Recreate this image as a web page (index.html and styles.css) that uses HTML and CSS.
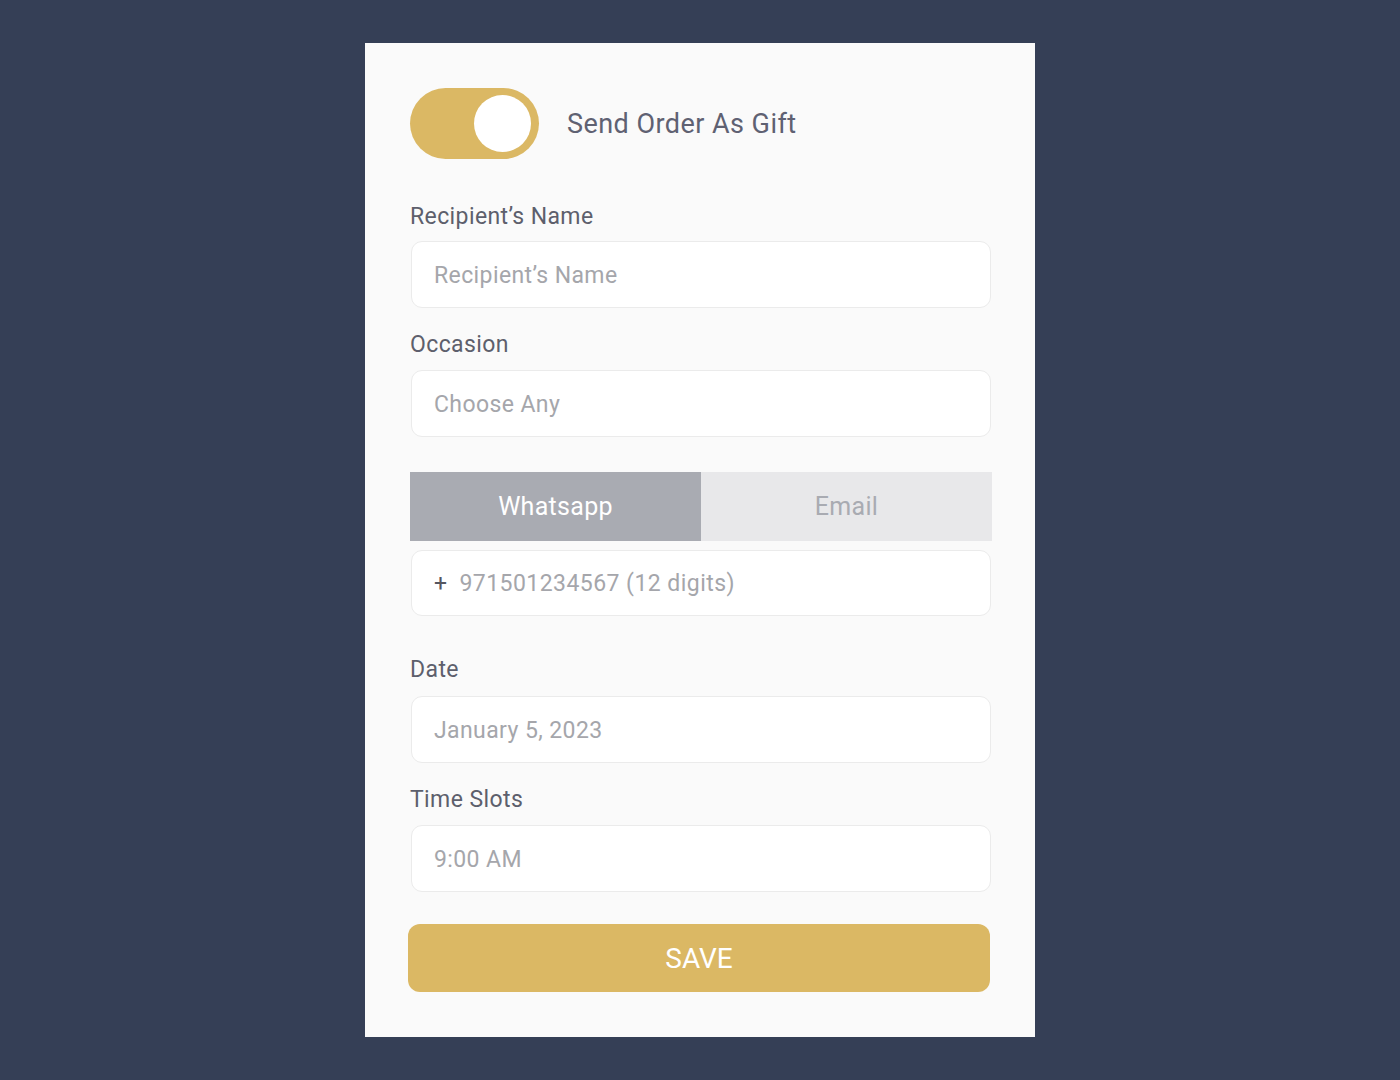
FILE: index.html
```html
<!DOCTYPE html>
<html>
<head>
<meta charset="utf-8">
<link rel="stylesheet" href="styles.css">
</head>
<body>
<div class="card">
  <div class="gift-row">
    <div class="toggle"><span class="knob"></span></div>
    <span class="gift-text">Send Order As Gift</span>
  </div>

  <div class="label first">Recipient’s Name</div>
  <div class="field"><span class="ph">Recipient’s Name</span></div>

  <div class="label">Occasion</div>
  <div class="field"><span class="ph">Choose Any</span></div>

  <div class="tabs">
    <div class="tab active">Whatsapp</div>
    <div class="tab">Email</div>
  </div>
  <div class="field phone"><span class="plus">+</span><span class="ph">971501234567 (12 digits)</span></div>

  <div class="label date">Date</div>
  <div class="field"><span class="ph">January 5, 2023</span></div>

  <div class="label">Time Slots</div>
  <div class="field"><span class="ph">9:00 AM</span></div>

  <div class="save">SAVE</div>
</div>
</body>
</html>
```

FILE: styles.css
```css
html, body {
  margin: 0;
  padding: 0;
}
body {
  background: #353f56;
  font-family: Roboto, "Liberation Sans", sans-serif;
  font-weight: 400;
  width: 1400px;
  height: 1080px;
  display: flex;
  justify-content: center;
  align-items: flex-start;
}
.card {
  margin-top: 43px;
  width: 670px;
  height: 994px;
  box-sizing: border-box;
  background: #fafafa;
  padding: 45px 44px 45px 45px;
  display: flex;
  flex-direction: column;
}
.gift-row {
  display: flex;
  align-items: center;
  height: 71px;
}
.toggle {
  width: 129px;
  height: 71px;
  border-radius: 36px;
  background: #dbb864;
  position: relative;
  flex: none;
}
.knob {
  position: absolute;
  width: 57px;
  height: 57px;
  border-radius: 50%;
  background: #fff;
  top: 7px;
  left: 64px;
}
.gift-text {
  margin-left: 28px;
  font-size: 27px;
  letter-spacing: 0.45px;
  color: #5f6172;
}
.label {
  font-size: 23px;
  letter-spacing: 0.4px;
  line-height: 26px;
  color: #5d5f6c;
  margin-top: 24px;
  margin-bottom: 12px;
}
.label.first {
  margin-top: 45px;
  margin-bottom: 11px;
}
.label.date {
  margin-top: 41px;
  margin-bottom: 13px;
}
.field {
  height: 67px;
  box-sizing: border-box;
  margin-left: 1px;
  border: 1px solid #ebebeb;
  border-radius: 11px;
  background: #fff;
  display: flex;
  align-items: center;
  padding-left: 22px;
  padding-top: 2px;
  font-size: 23px;
  letter-spacing: 0.4px;
}
.ph {
  color: #a5a6ab;
}
.tabs {
  margin-top: 35px;
  display: flex;
  height: 69px;
  margin-right: -1px;
}
.tab {
  flex: 1;
  display: flex;
  align-items: center;
  justify-content: center;
  font-size: 25px;
  letter-spacing: 0.3px;
  padding-top: 1px;
  background: #e8e8ea;
  color: #a9abb2;
}
.tab.active {
  background: #a9abb2;
  color: #fff;
}
.field.phone {
  margin-top: 9px;
}
.field.phone .ph {
  letter-spacing: 0.45px;
}
.plus {
  color: #55565f;
  margin-right: 12px;
}
.save {
  margin-top: 32px;
  margin-left: -2px;
  margin-right: 1px;
  height: 68px;
  border-radius: 12px;
  background: #dbb864;
  color: #fff;
  font-size: 28px;
  display: flex;
  align-items: center;
  justify-content: center;
  padding-top: 1px;
  box-sizing: border-box;
}
```
